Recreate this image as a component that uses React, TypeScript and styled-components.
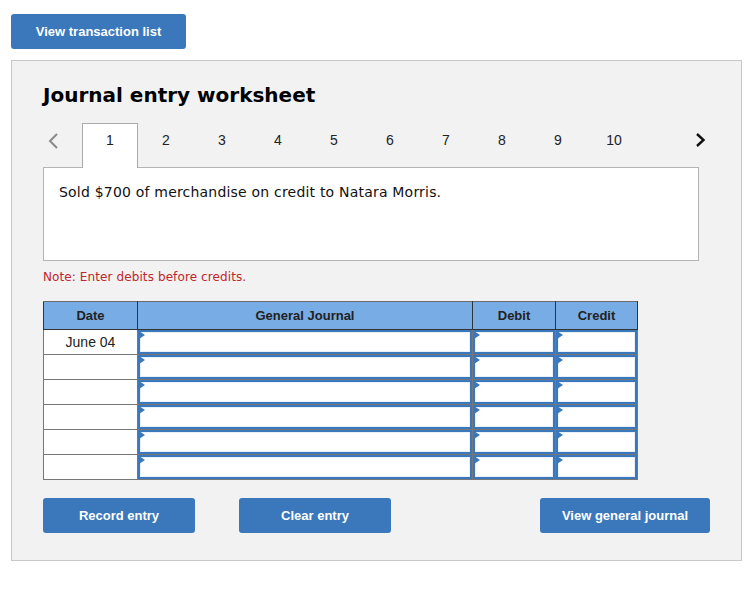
import React from 'react';
import styled, { createGlobalStyle } from 'styled-components';

const GlobalStyle = createGlobalStyle`
  html, body {
    margin: 0;
    padding: 0;
    background: #ffffff;
  }
  body {
    font-family: "Liberation Sans", Arial, sans-serif;
  }
`;

const Page = styled.div`
  padding: 14px 12px 0 11px;
  width: 731px;
`;

const BlueButton = styled.button<{ $width: number }>`
  width: ${p => p.$width}px;
  height: 35px;
  padding: 0;
  border: none;
  border-radius: 3px;
  background: #3a77bb;
  color: #ffffff;
  font-family: "Liberation Sans", Arial, sans-serif;
  font-weight: bold;
  font-size: 13px;
  cursor: pointer;
`;

const Panel = styled.div`
  margin-top: 11px;
  box-sizing: border-box;
  width: 731px;
  height: 501px;
  border: 1px solid #c8c8c8;
  background: #f2f2f2;
  padding: 20px 31px 0 31px;
`;

const Title = styled.h2`
  margin: 0;
  font-family: "DejaVu Sans", Verdana, sans-serif;
  font-weight: bold;
  font-size: 20px;
  color: #000000;
  line-height: 28px;
`;

const TabRow = styled.div`
  display: flex;
  align-items: flex-end;
  margin-top: 14px;
  height: 44px;
`;

const Arrow = styled.div<{ $side: 'left' | 'right' }>`
  width: 39px;
  height: 44px;
  display: flex;
  align-items: flex-start;
  justify-content: ${p => (p.$side === 'left' ? 'flex-start' : 'flex-end')};
  padding: 9px ${p => (p.$side === 'left' ? '0 0 4px' : '3px 0 0')};
  box-sizing: border-box;
  color: ${p => (p.$side === 'left' ? '#8a8a8a' : '#111111')};
`;

const Tab = styled.div<{ $active?: boolean }>`
  box-sizing: border-box;
  width: 56px;
  display: flex;
  justify-content: center;
  padding-top: 8px;
  font-family: "Liberation Sans", Arial, sans-serif;
  font-size: 14px;
  color: #222222;
  background: ${p => (p.$active ? '#ffffff' : 'transparent')};
  border: 1px solid ${p => (p.$active ? '#a9a9a9' : 'transparent')};
  border-bottom: none;
  position: relative;
  z-index: 1;
  margin-bottom: ${p => (p.$active ? '-1px' : '0')};
  height: ${p => (p.$active ? '45px' : '44px')};
`;

const Spacer = styled.div`
  flex: 1;
`;

const Description = styled.div`
  box-sizing: border-box;
  width: 656px;
  height: 94px;
  background: #ffffff;
  border: 1px solid #b4b4b4;
  padding: 16px 15px;
  font-family: "DejaVu Sans", Verdana, sans-serif;
  font-size: 14px;
  letter-spacing: 0.2px;
  color: #111111;
`;

const Note = styled.div`
  margin-top: 9px;
  font-family: "DejaVu Sans", Verdana, sans-serif;
  font-size: 12px;
  letter-spacing: 0.1px;
  color: #c0262c;
`;

const Table = styled.table`
  margin-top: 17px;
  border-collapse: collapse;
  table-layout: fixed;
  width: 594px;
`;

const HeadCell = styled.th`
  height: 27px;
  padding: 0;
  background: #78ace4;
  border: 1px solid #333333;
  border-top-color: #6a6a6a;
  font-family: "Liberation Sans", Arial, sans-serif;
  font-weight: bold;
  font-size: 13px;
  color: #222222;
  text-align: center;
`;

const DateCell = styled.td`
  height: 24px;
  padding: 0;
  border: 1px solid #777777;
  background: #ffffff;
  font-size: 14px;
  color: #222222;
  text-align: center;
`;

const InputCell = styled.td`
  height: 24px;
  padding: 0;
  border: 1px solid #777777;
  background: #ffffff;
`;

const EntryBox = styled.div`
  position: relative;
  box-sizing: border-box;
  height: 24px;
  border: 2px solid #3a77bb;
  background: #ffffff;
  box-shadow: inset 0 0 0 1px #e8f0fa;
`;

const Marker = styled.span`
  position: absolute;
  left: -1px;
  top: -1px;
  width: 0;
  height: 0;
  border-top: 4px solid transparent;
  border-bottom: 4px solid transparent;
  border-left: 6px solid #3a77bb;
`;

const ButtonRow = styled.div`
  display: flex;
  margin-top: 18px;
  width: 667px;
`;

const Gap = styled.div<{ $w?: number }>`
  width: ${p => (p.$w ? `${p.$w}px` : 'auto')};
  flex: ${p => (p.$w ? '0 0 auto' : '1')};
`;

const ChevronLeft = () => (
  <svg width="12" height="18" viewBox="0 0 12 18">
    <path d="M10 2 L3 9 L10 16" fill="none" stroke="currentColor" strokeWidth="2" />
  </svg>
);

const ChevronRight = () => (
  <svg width="12" height="16" viewBox="0 0 12 16">
    <path d="M2 2 L8.5 8 L2 14" fill="none" stroke="currentColor" strokeWidth="2.4" />
  </svg>
);

const Entry = () => (
  <EntryBox>
    <Marker />
  </EntryBox>
);

const columns = [
  { label: 'Date', width: 94 },
  { label: 'General Journal', width: 335 },
  { label: 'Debit', width: 83 },
  { label: 'Credit', width: 82 },
];

const rows = ['June 04', '', '', '', '', ''];

export default function App() {
  return (
    <>
      <GlobalStyle />
      <Page>
        <BlueButton $width={175}>View transaction list</BlueButton>
        <Panel>
          <Title>Journal entry worksheet</Title>
          <TabRow>
            <Arrow $side="left">
              <ChevronLeft />
            </Arrow>
            {[1, 2, 3, 4, 5, 6, 7, 8, 9, 10].map(n => (
              <Tab key={n} $active={n === 1}>
                {n}
              </Tab>
            ))}
            <Spacer />
            <Arrow $side="right">
              <ChevronRight />
            </Arrow>
          </TabRow>
          <Description>Sold $700 of merchandise on credit to Natara Morris.</Description>
          <Note>Note: Enter debits before credits.</Note>
          <Table>
            <colgroup>
              {columns.map(c => (
                <col key={c.label} style={{ width: c.width }} />
              ))}
            </colgroup>
            <thead>
              <tr>
                {columns.map(c => (
                  <HeadCell key={c.label}>{c.label}</HeadCell>
                ))}
              </tr>
            </thead>
            <tbody>
              {rows.map((d, i) => (
                <tr key={i}>
                  <DateCell>{d}</DateCell>
                  <InputCell>
                    <Entry />
                  </InputCell>
                  <InputCell>
                    <Entry />
                  </InputCell>
                  <InputCell>
                    <Entry />
                  </InputCell>
                </tr>
              ))}
            </tbody>
          </Table>
          <ButtonRow>
            <BlueButton $width={152}>Record entry</BlueButton>
            <Gap $w={44} />
            <BlueButton $width={152}>Clear entry</BlueButton>
            <Gap />
            <BlueButton $width={170}>View general journal</BlueButton>
          </ButtonRow>
        </Panel>
      </Page>
    </>
  );
}
